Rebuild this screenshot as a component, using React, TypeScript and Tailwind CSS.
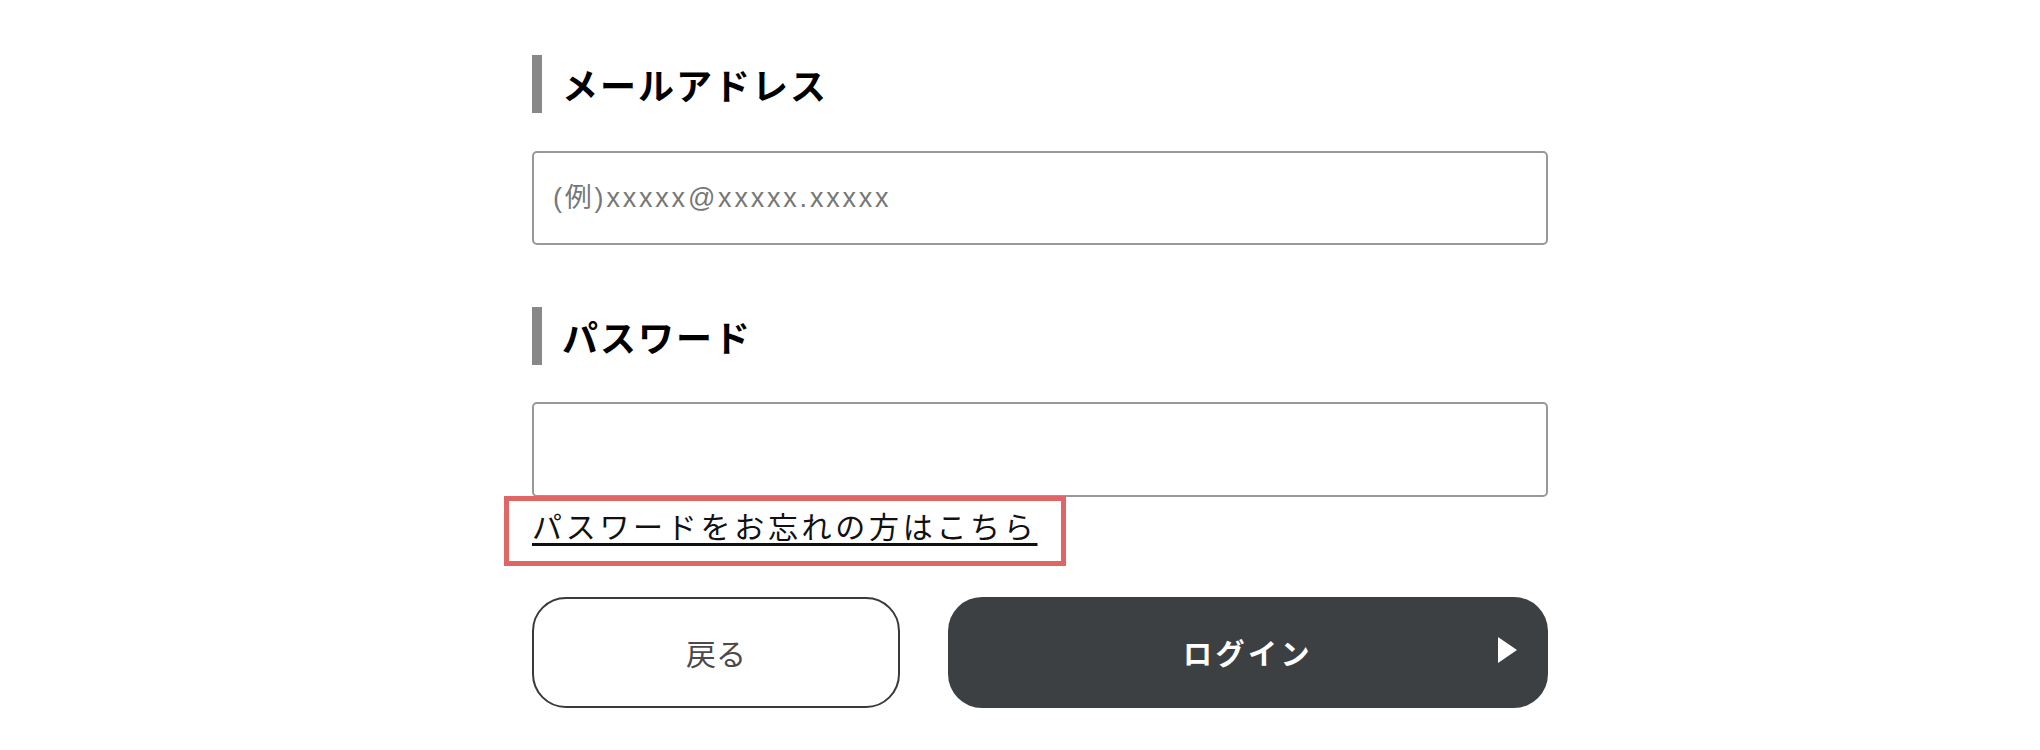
import { useState } from 'react'

const jp = "font-['Noto_Sans_CJK_JP','Noto_Sans',sans-serif]"

function Label({ text }: { text: string }) {
  return (
    <div className="flex items-center gap-[20px] h-[58px]">
      <span className="block w-[10px] h-[58px] bg-[#888888]" />
      <span className={`${jp} text-[36px] font-bold text-black tracking-[2px] leading-none`}>{text}</span>
    </div>
  )
}

export default function App() {
  const [email, setEmail] = useState('')
  const [password, setPassword] = useState('')

  return (
    <div className="w-[2040px] h-[750px] bg-white overflow-hidden">
      <div className="ml-[532px] w-[1016px] pt-[55px]">
        {/* メールアドレス */}
        <Label text="メールアドレス" />
        <input
          type="email"
          value={email}
          onChange={(e) => setEmail(e.target.value)}
          placeholder="(例)xxxxx@xxxxx.xxxxx"
          className="mt-[38px] block w-full h-[94px] border-2 border-[#999999] rounded-[5px] px-[19px] font-['Liberation_Sans','Noto_Sans_CJK_JP',sans-serif] text-[27px] tracking-[2.8px] text-[#333] placeholder:text-[#777777] outline-none"
        />

        {/* パスワード */}
        <div className="mt-[62px]">
          <Label text="パスワード" />
        </div>
        <input
          type="password"
          value={password}
          onChange={(e) => setPassword(e.target.value)}
          className="mt-[37px] block w-full h-[95px] border-2 border-[#999999] rounded-[5px] px-[19px] text-[25px] outline-none"
        />

        {/* forgot link */}
        <div className="mt-[6px] h-[44px] flex">
          <a
            href="#"
            className={`relative ${jp} text-[30px] leading-[44px] tracking-[3.7px] text-[#111] underline decoration-[3px] underline-offset-[5px]`}
          >
            パスワードをお忘れの方はこちら
            <span className="pointer-events-none absolute left-[-28px] right-[-28px] top-[-7px] bottom-[-19px] border-[5px] border-[#e06666]" />
          </a>
        </div>

        {/* buttons */}
        <div className="mt-[50px] flex gap-[48px]">
          <button className={`w-[368px] h-[111px] rounded-[34px] border-2 border-[#3a3a3a] bg-white ${jp} text-[30px] text-[#4a4a4a]`}>
            戻る
          </button>
          <button className={`relative flex-1 h-[111px] rounded-[34px] bg-[#3d4043] ${jp} text-[29px] font-bold tracking-[3.5px] text-white`}>
            ログイン
            <svg className="absolute right-[31px] top-[40px]" width="19" height="26" viewBox="0 0 19 26">
              <polygon points="0,0 19,13 0,26" fill="#ffffff" />
            </svg>
          </button>
        </div>
      </div>
    </div>
  )
}
